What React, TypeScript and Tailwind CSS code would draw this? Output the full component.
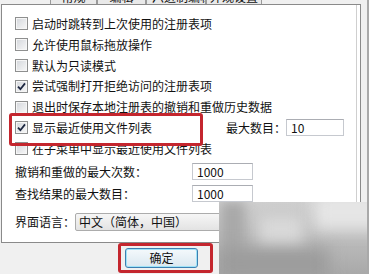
import React from 'react';

const cjk = "font-['Noto_Sans_CJK_SC',sans-serif]";

const CheckBox: React.FC<{ checked?: boolean }> = ({ checked }) => (
  <span className="w-[13px] h-[13px] shrink-0 flex items-center justify-center border border-[#8e8f8f] bg-[linear-gradient(135deg,#d3d6db,#f8f8f8)] shadow-[inset_0_0_0_1px_#f6f6f6]">
    {checked && (
      <svg width="9" height="9" viewBox="0 0 9 9">
        <path d="M1 4.6 L3.4 7.2 L8 1.4" stroke="#1c2640" strokeWidth="1.8" fill="none" />
      </svg>
    )}
  </span>
);

const Row: React.FC<{ checked?: boolean; label: string; children?: React.ReactNode }> = ({ checked, label, children }) => (
  <div className="h-[20.8px] flex items-center">
    <div className="flex items-center gap-[4px] w-[211px] shrink-0">
      <CheckBox checked={checked} />
      <span className="whitespace-nowrap">{label}</span>
    </div>
    {children}
  </div>
);

const Field: React.FC<{ value: string; w: string }> = ({ value, w }) => (
  <div className={`${w} h-[17px] border border-[#c6c9cf] border-t-[#abadb3] bg-white flex items-center pl-[4px] text-[12px]`}>
    {value}
  </div>
);

const tabs = [
  { w: 'w-[47px]', t: '常规' },
  { w: 'w-[49px]', t: '编辑' },
  { w: 'w-[60px]', t: '十六进制编辑' },
  { w: 'w-[56px]', t: '外观设置' },
];

const App: React.FC = () => {
  return (
    <div className={`relative w-[369px] h-[274px] overflow-hidden bg-[#f0f0f0] border-r-[2px] border-[#a9a9a9] text-[12px] leading-[12px] text-[#111] ${cjk}`}>
      {/* tab strip, only bottoms visible */}
      <div className="h-[4px] flex pl-[50px]">
        {tabs.map((tab) => (
          <div key={tab.t} className={`${tab.w} h-[4px] overflow-hidden flex items-end justify-center border-l border-r border-[#9a9a9a] bg-[#e9e9e9]`}>
            <span className="whitespace-nowrap mb-[1px] text-[12px] leading-[12px]">{tab.t}</span>
          </div>
        ))}
      </div>

      {/* panel */}
      <div className="ml-[1px] w-[360px] h-[239px] bg-white border border-[#8a8a8a] shadow-[inset_-3px_0_0_#fff,inset_-4px_0_0_#cfcfcf] pl-[13px] pt-[8.6px]">
        <Row label="启动时跳转到上次使用的注册表项" />
        <Row label="允许使用鼠标拖放操作" />
        <Row label="默认为只读模式" />
        <Row checked label="尝试强制打开拒绝访问的注册表项" />
        <Row label="退出时保存本地注册表的撤销和重做历史数据" />
        <Row checked label="显示最近使用文件列表">
          <span className="w-[60px] shrink-0">最大数目：</span>
          <Field value="10" w="w-[58px]" />
        </Row>
        <Row label="在子菜单中显示最近使用文件列表" />

        <div className="h-[22px] mt-[1.8px] flex items-center">
          <span className="w-[177px] shrink-0">撤销和重做的最大次数：</span>
          <Field value="1000" w="w-[61px]" />
        </div>
        <div className="h-[22px] flex items-center">
          <span className="w-[177px] shrink-0">查找结果的最大数目：</span>
          <Field value="1000" w="w-[61px]" />
        </div>
        <div className="h-[22px] mt-[6px] flex items-center">
          <span className="w-[60px] shrink-0">界面语言：</span>
          <div className="w-[180px] h-[18px] border border-[#acacac] rounded-[2px] bg-[linear-gradient(180deg,#f6f6f6,#e3e3e3)] flex items-center pl-[3px]">
            中文（简体，中国）
          </div>
        </div>
      </div>

      {/* OK button with highlight */}
      <div className="ml-[118px] w-[95px] h-[30px] border-[3px] border-[#c4262e] rounded-[3px] pt-[2px] pl-[4px]">
        <button className="w-[73px] h-[20px] rounded-[3px] border border-[#3c7fb1] shadow-[inset_0_0_0_1px_#9fe3f8] bg-[linear-gradient(180deg,#f4f9fc,#dbe8f0)] flex items-center justify-center text-[12px] leading-[12px] text-[#111]">
          确定
        </button>
      </div>

      {/* highlight around the recent files option */}
      <div className="absolute left-[9px] top-[113px] w-[194px] h-[33px] border-[3px] border-[#c4262e] rounded-[3px]" />

      {/* smeared corner */}
      <div className="absolute left-[219px] top-[202px] w-[150px] h-[72px] overflow-hidden bg-[linear-gradient(180deg,#cfcfcf,#a9a9a9)]">
        <div className="absolute left-[2px] top-[0px] w-[24px] h-[80px] bg-[#a8a8a8] blur-[6px]" />
        <div className="absolute left-[95px] top-[-8px] w-[70px] h-[36px] bg-[#e6e6e6] blur-[8px]" />
        <div className="absolute left-[0px] top-[46px] w-[110px] h-[32px] bg-[#9c9c9c] blur-[8px]" />
        <div className="absolute left-[40px] top-[14px] w-[44px] h-[26px] bg-[#d9d9d9] blur-[7px]" />
      </div>
    </div>
  );
};

export default App;
